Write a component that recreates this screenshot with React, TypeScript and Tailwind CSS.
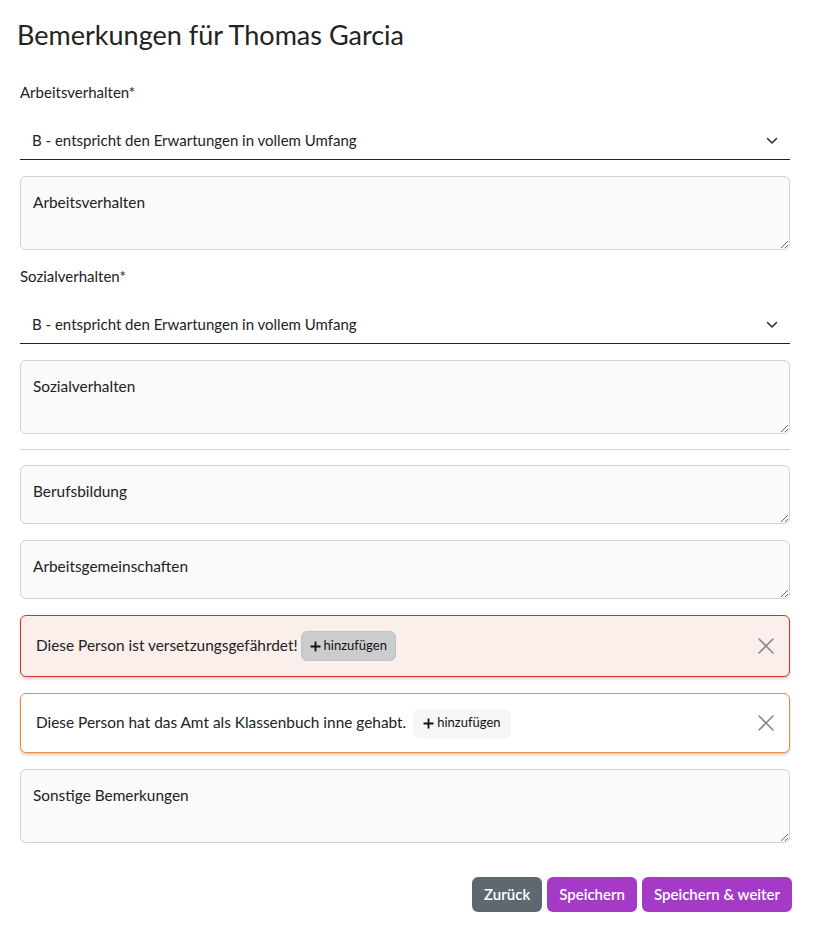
import React from "react";

const font = { fontFamily: "Lato, 'Open Sans', sans-serif" };

function Chevron() {
  return (
    <svg width="12" height="8" viewBox="0 0 12 8" fill="none">
      <path d="M1.5 1.5 L6 6 L10.5 1.5" stroke="#333" strokeWidth="1.6" strokeLinecap="round" strokeLinejoin="round" />
    </svg>
  );
}

function Close() {
  return (
    <svg width="18" height="18" viewBox="0 0 18 18" fill="none">
      <path d="M2 2 L16 16 M16 2 L2 16" stroke="#8a8a8a" strokeWidth="1.6" strokeLinecap="round" />
    </svg>
  );
}

function Select({ value }: { value: string }) {
  return (
    <div className="flex h-[38px] items-center justify-between border-b border-[#222] pl-3 pr-3 text-[15px] text-[#222]">
      <span>{value}</span>
      <Chevron />
    </div>
  );
}

function Area({ ph, h }: { ph: string; h: string }) {
  return (
    <textarea
      placeholder={ph}
      className={`block w-full ${h} rounded-md border border-[#cfd3d8] bg-[#fafafa] px-3 pt-[14px] text-[15.4px] text-[#222] placeholder:text-[#222] outline-none`}
      style={font}
    />
  );
}

function Plus() {
  return (
    <svg width="11" height="11" viewBox="0 0 11 11" fill="none">
      <path d="M5.5 0.5 V10.5 M0.5 5.5 H10.5" stroke="#111" strokeWidth="1.8" />
    </svg>
  );
}

export default function App() {
  return (
    <div className="min-h-[942px] w-[814px] bg-white text-[#222]" style={font}>
      <div className="pl-5 pr-6 pb-8">
        <h1 className="-ml-[3px] pt-[16px] text-[27px] leading-[38px] text-[#222]">Bemerkungen für Thomas Garcia</h1>

        <div className="mt-[28px] text-[15px] leading-5">Arbeitsverhalten*</div>
        <div className="mt-5"><Select value="B - entspricht den Erwartungen in vollem Umfang" /></div>
        <div className="mt-4"><Area ph="Arbeitsverhalten" h="h-[74px]" /></div>

        <div className="mt-4 text-[15px] leading-5">Sozialverhalten*</div>
        <div className="mt-5"><Select value="B - entspricht den Erwartungen in vollem Umfang" /></div>
        <div className="mt-4"><Area ph="Sozialverhalten" h="h-[74px]" /></div>

        <hr className="mt-[15px] mb-[15px] border-t border-[#cfd3d8]" />

        <Area ph="Berufsbildung" h="h-[59px]" />
        <div className="mt-4"><Area ph="Arbeitsgemeinschaften" h="h-[59px]" /></div>

        <div className="mt-4 flex h-[62px] items-center justify-between rounded-md border border-[#d9302c] bg-[#fbefeb] pl-[15px] pr-[14px] shadow-[0_2px_3px_rgba(0,0,0,0.18)]">
          <div className="flex items-center text-[15.4px]">
            <span>Diese Person ist versetzungsgefährdet!</span>
            <button className="ml-[3px] flex h-[30px] items-center gap-[3px] rounded-md border border-[#bfc1c3] bg-[#cbcccd] px-2 text-[13px] text-[#111]">
              <Plus /> hinzufügen
            </button>
          </div>
          <Close />
        </div>

        <div className="mt-4 flex h-[60px] items-center justify-between rounded-md border border-[#ec8a3d] bg-white pl-[15px] pr-[14px] shadow-[0_2px_3px_rgba(0,0,0,0.18)]">
          <div className="flex items-center text-[15.4px]">
            <span>Diese Person hat das Amt als Klassenbuch inne gehabt.</span>
            <button className="ml-[7px] flex h-[29px] items-center gap-[3px] rounded-md bg-[#f5f6f7] px-[10px] text-[13px] text-[#111]">
              <Plus /> hinzufügen
            </button>
          </div>
          <Close />
        </div>

        <div className="mt-4"><Area ph="Sonstige Bemerkungen" h="h-[74px]" /></div>

        <div className="-mr-[2px] mt-[34px] flex justify-end gap-[5px]">
          <button className="h-[35px] rounded-md bg-[#5e6870] px-3 text-[15px] font-semibold text-white">Zurück</button>
          <button className="h-[35px] rounded-md bg-[#a53ac6] px-3 text-[15px] font-semibold text-white">Speichern</button>
          <button className="h-[35px] rounded-md bg-[#a53ac6] px-3 text-[15px] font-semibold text-white">Speichern &amp; weiter</button>
        </div>
      </div>
    </div>
  );
}
